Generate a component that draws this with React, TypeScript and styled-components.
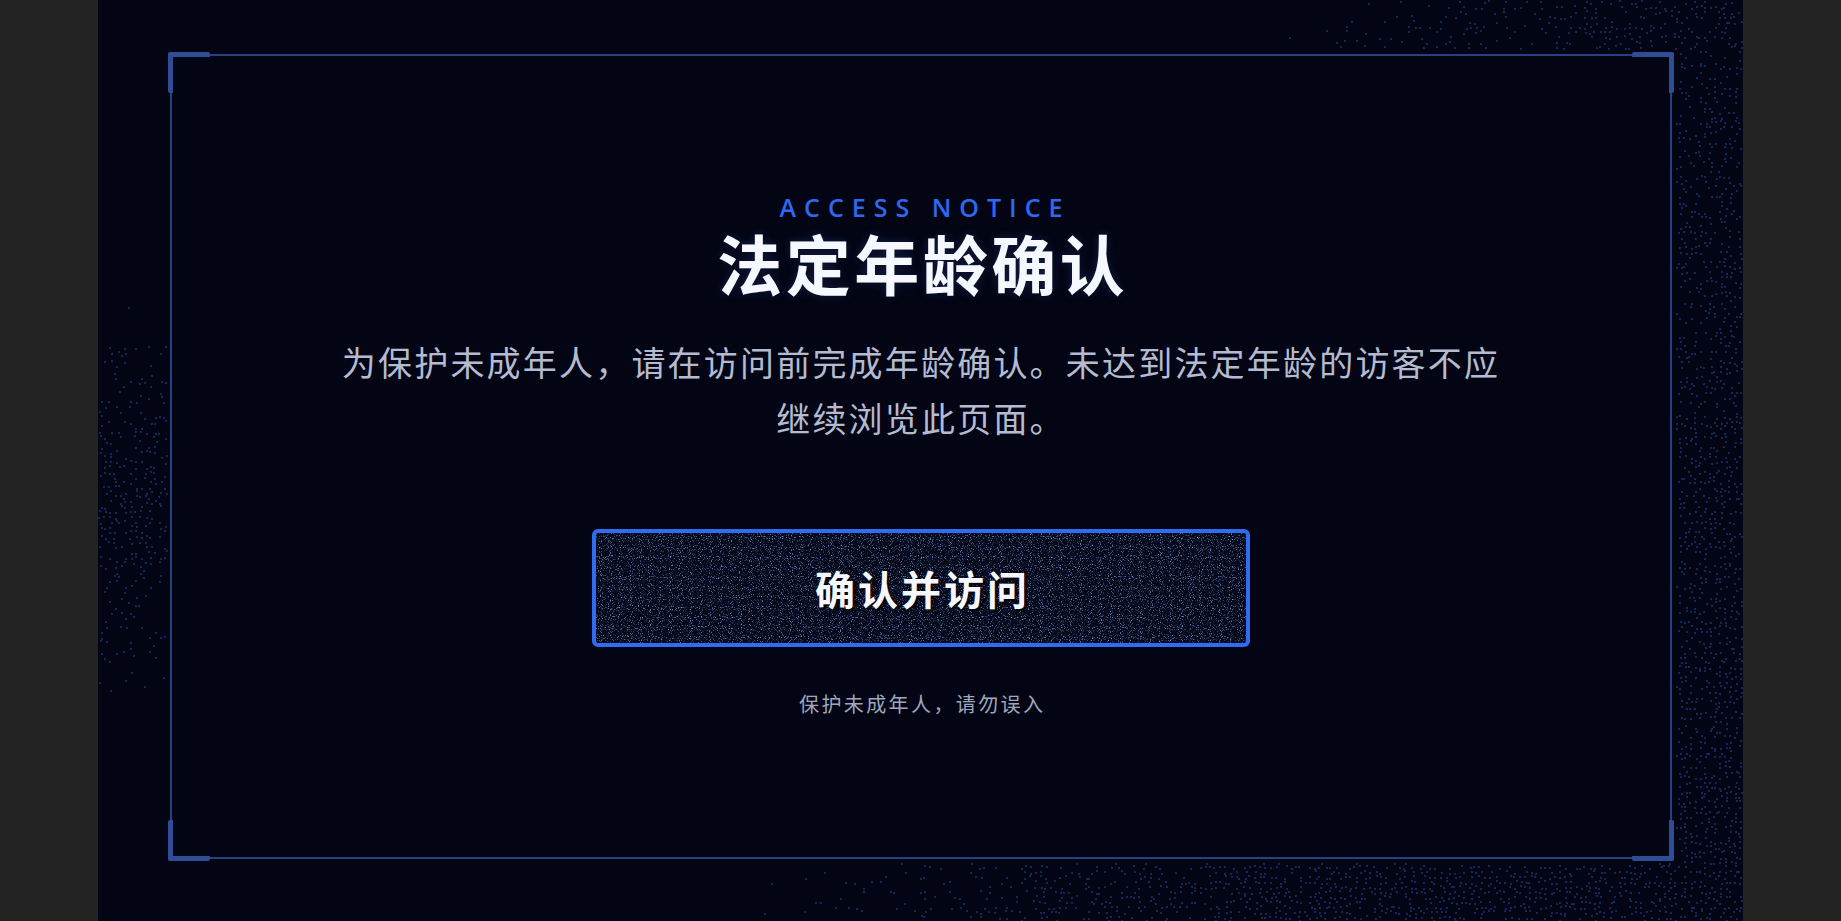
import React, { useMemo } from 'react';
import styled, { createGlobalStyle } from 'styled-components';

const PANEL_W = 1645;
const PANEL_H = 921;
// frame rectangle inside the panel, used to keep the dot field outside of it
const FRAME = { left: 72, top: 54, right: 1574, bottom: 859 };
const STEP = 5;

type CornerPos = 'tl' | 'tr' | 'bl' | 'br';

const mulberry32 = (seed: number) => {
  let a = seed;
  return () => {
    a |= 0;
    a = (a + 0x6d2b79f5) | 0;
    let t = Math.imul(a ^ (a >>> 15), 1 | a);
    t = (t + Math.imul(t ^ (t >>> 7), 61 | t)) ^ t;
    return ((t ^ (t >>> 14)) >>> 0) / 4294967296;
  };
};

const clamp01 = (v: number) => Math.min(1, Math.max(0, v));

// how thick the particles are at a given spot around the frame
const density = (x: number, y: number) => {
  let p = 0;
  if (y < FRAME.top) p = Math.max(p, clamp01((x - 1180) / 380) * 0.45);
  if (x > FRAME.right) p = Math.max(p, 0.36 + 0.3 * (y / PANEL_H));
  if (y > FRAME.bottom) p = Math.max(p, clamp01((x - 640) / 600) * 0.66);
  if (x < FRAME.left) {
    const band = Math.exp(-((y - 500) ** 2) / (2 * 95 ** 2));
    p = Math.max(p, band > 0.12 ? band * 0.5 : 0);
  }
  return p;
};

const buildDots = () => {
  const rand = mulberry32(91731);
  let d = '';
  for (let y = 0; y < PANEL_H; y += STEP) {
    for (let x = 0; x < PANEL_W; x += STEP) {
      const px = x + rand() * (STEP - 1.5);
      const py = y + rand() * (STEP - 1.5);
      const roll = rand();
      if (
        px > FRAME.left - 4 &&
        px < FRAME.right + 4 &&
        py > FRAME.top - 4 &&
        py < FRAME.bottom + 4
      )
        continue;
      if (roll < density(px, py)) {
        d += `M${Math.round(px)} ${Math.round(py)}h2v2h-2z`;
      }
    }
  }
  return d;
};

const App = () => {
  const dots = useMemo(buildDots, []);

  return (
    <>
      <GlobalStyle />
      <Panel>
        <DotField viewBox={`0 0 ${PANEL_W} ${PANEL_H}`} aria-hidden>
          <path d={dots} fill="#1d3a7e" />
        </DotField>
        <Frame>
          <Corner $pos="tl" />
          <Corner $pos="tr" />
          <Corner $pos="bl" />
          <Corner $pos="br" />
          <Content>
            <Eyebrow>ACCESS NOTICE</Eyebrow>
            <Title>法定年龄确认</Title>
            <Lead>
              为保护未成年人，请在访问前完成年龄确认。未达到法定年龄的访客不应继续浏览此页面。
            </Lead>
            <EnterButton type="button">
              <Grain aria-hidden>
                <filter id="btn-grain" x="0" y="0" width="100%" height="100%">
                  <feTurbulence
                    type="fractalNoise"
                    baseFrequency="0.9"
                    numOctaves="1"
                    seed="7"
                  />
                  <feColorMatrix
                    type="matrix"
                    values="0 0 0 0 0.15  0 0 0 0 0.26  0 0 0 0 0.6  4.5 0 0 0 -2.45"
                  />
                </filter>
                <rect width="100%" height="100%" filter="url(#btn-grain)" />
              </Grain>
              <ButtonLabel>确认并访问</ButtonLabel>
            </EnterButton>
            <Footnote>保护未成年人，请勿误入</Footnote>
          </Content>
        </Frame>
      </Panel>
    </>
  );
};

export default App;

const GlobalStyle = createGlobalStyle`
  html, body {
    margin: 0;
    padding: 0;
    background: #232323;
  }
  body {
    font-family: "Noto Sans", "Noto Sans CJK SC", sans-serif;
  }
`;

const Panel = styled.main`
  position: relative;
  box-sizing: border-box;
  width: ${PANEL_W}px;
  height: 100vh;
  min-height: ${PANEL_H}px;
  margin: 0 auto;
  padding: 54px 71px 62px 72px;
  background: #030514;
  display: flex;
`;

const DotField = styled.svg`
  position: absolute;
  left: 0;
  top: 0;
  width: ${PANEL_W}px;
  height: ${PANEL_H}px;
  opacity: 0.65;
`;

const Frame = styled.section`
  position: relative;
  flex: 1;
  box-sizing: border-box;
  border: 2px solid #26417f;
  background: #030514;
  display: flex;
  align-items: center;
  justify-content: center;
`;

const Corner = styled.span<{ $pos: CornerPos }>`
  position: absolute;
  box-sizing: border-box;
  width: 42px;
  height: 41px;
  border: 0 solid #2f4d94;
  ${({ $pos }) => ($pos[0] === 't' ? 'top: -4px;' : 'bottom: -4px;')}
  ${({ $pos }) => ($pos[1] === 'l' ? 'left: -4px;' : 'right: -4px;')}
  ${({ $pos }) =>
    $pos[0] === 't' ? 'border-top-width: 5px;' : 'border-bottom-width: 5px;'}
  ${({ $pos }) =>
    $pos[1] === 'l' ? 'border-left-width: 5px;' : 'border-right-width: 5px;'}
  border-radius: 2px;
`;

const Content = styled.div`
  display: flex;
  flex-direction: column;
  align-items: center;
  text-align: center;
`;

const Eyebrow = styled.div`
  font-family: "Open Sans", "Liberation Sans", sans-serif;
  font-weight: 600;
  font-size: 25px;
  line-height: 26px;
  letter-spacing: 8px;
  padding-left: 8px;
  color: #2d68ee;
  margin-top: -2px;
`;

const Title = styled.h1`
  margin: 4px 0 0;
  font-family: "Noto Sans CJK SC", "Noto Sans", sans-serif;
  font-weight: 700;
  font-size: 65px;
  line-height: 76px;
  letter-spacing: 3.5px;
  padding-left: 3.5px;
  color: #f6f8ff;
  text-shadow: 0 0 10px rgba(70, 110, 230, 0.25), 2px 2px 2px rgba(0, 0, 0, 0.55);
`;

const Lead = styled.p`
  margin: 34px 0 0;
  max-width: 1180px;
  font-family: "Noto Sans CJK SC", "Noto Sans", sans-serif;
  font-weight: 400;
  font-size: 34px;
  line-height: 56px;
  letter-spacing: 2.2px;
  color: #b4bbd1;
`;

const EnterButton = styled.button`
  position: relative;
  overflow: hidden;
  margin-top: 83px;
  box-sizing: border-box;
  width: 658px;
  height: 118px;
  padding: 0;
  border: 4px solid #2f6cf2;
  border-radius: 6px;
  background: #050919;
  cursor: pointer;
  display: flex;
  align-items: center;
  justify-content: center;
`;

const Grain = styled.svg`
  position: absolute;
  inset: 0;
  width: 100%;
  height: 100%;
`;

const ButtonLabel = styled.span`
  position: relative;
  font-family: "Noto Sans CJK SC", "Noto Sans", sans-serif;
  font-weight: 700;
  font-size: 40px;
  letter-spacing: 3px;
  padding-left: 3px;
  color: #f7f8ff;
  text-shadow: 2px 2px 3px rgba(0, 0, 0, 0.9);
`;

const Footnote = styled.div`
  margin-top: 43px;
  font-family: "Noto Sans CJK SC", "Noto Sans", sans-serif;
  font-size: 20px;
  line-height: 28px;
  letter-spacing: 2.4px;
  padding-left: 2.4px;
  color: #9fa7bd;
`;
